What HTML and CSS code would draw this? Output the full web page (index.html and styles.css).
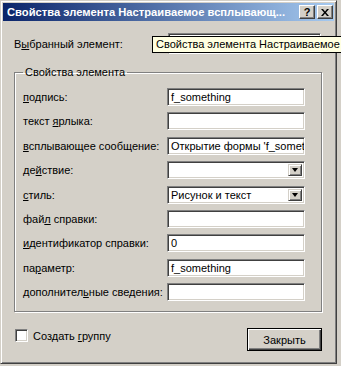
FILE: index.html
```html
<!DOCTYPE html>
<html lang="ru">
<head>
    <meta charset="UTF-8">
    <title>Свойства элемента</title>
    <link rel="stylesheet" href="styles.css">
</head>
<body>
    <div class="window">
        <div class="titlebar">
            <span class="title">Свойства элемента Настраиваемое всплывающ...</span>
            <span class="tbtn help">?</span>
            <span class="tbtn close">
                <svg width="8" height="7" viewBox="0 0 8 7"><path d="M0 0h2l2 2.5L6 0h2L5 3.5 8 7H6L4 4.5 2 7H0l3-3.5z" fill="#000"/></svg>
            </span>
        </div>

        <div class="content">
            <div class="selected-row">
                <span class="lbl">В<u>ы</u>бранный элемент:</span>
                <div class="field combo wide"><span class="drop"></span></div>
                <div class="tooltip">Свойства элемента Настраиваемое всплывающее сообщение</div>
            </div>

            <fieldset class="group">
                <legend>Свойства элемента</legend>
                <div class="grid">
                    <span class="lbl"><u>п</u>одпись:</span>
                    <div class="field">f_something</div>

                    <span class="lbl">текст <u>я</u>рлыка:</span>
                    <div class="field"></div>

                    <span class="lbl"><u>в</u>сплывающее сообщение:</span>
                    <div class="field">Открытие формы 'f_something'</div>

                    <span class="lbl">де<u>й</u>ствие:</span>
                    <div class="field combo"><span class="drop"></span></div>

                    <span class="lbl"><u>с</u>тиль:</span>
                    <div class="field combo">Рисунок и текст<span class="drop"></span></div>

                    <span class="lbl">фай<u>л</u> справки:</span>
                    <div class="field"></div>

                    <span class="lbl"><u>и</u>дентификатор справки:</span>
                    <div class="field">0</div>

                    <span class="lbl">па<u>р</u>аметр:</span>
                    <div class="field">f_something</div>

                    <span class="lbl">дополнител<u>ь</u>ные сведения:</span>
                    <div class="field"></div>
                </div>
            </fieldset>

            <div class="bottom-row">
                <label class="check"><span class="box"></span><span>Создать <u>г</u>руппу</span></label>
                <button class="btn">Закрыть</button>
            </div>
        </div>
    </div>
</body>
</html>
```

FILE: styles.css
```css
body {
    margin: 0;
    background: #d4d0c8;
    font-family: 'Liberation Sans', Arial, sans-serif;
    font-size: 11px;
    color: #000;
    overflow: hidden;
}

u {
    text-decoration: underline;
    text-underline-offset: 1px;
}

.window {
    width: 331px;
    height: 358px;
    border: 1px solid;
    border-color: #d4d0c8 #404040 #404040 #d4d0c8;
    box-shadow: inset 1px 1px 0 #fff, inset -1px -1px 0 #808080;
    padding: 2px;
    background: #d4d0c8;
}

.titlebar {
    height: 18px;
    display: flex;
    align-items: center;
    gap: 2px;
    padding: 0 1px 0 4px;
    background: linear-gradient(90deg, #0a246a, #a6caf0);
}

.title {
    flex: 1;
    color: #fff;
    font-weight: bold;
    font-size: 11.2px;
    white-space: nowrap;
    overflow: hidden;
}

.tbtn {
    width: 14px;
    height: 12px;
    display: flex;
    align-items: center;
    justify-content: center;
    background: #d4d0c8;
    border: 1px solid;
    border-color: #fff #404040 #404040 #fff;
    box-shadow: inset -1px -1px 0 #808080;
    font-weight: bold;
    font-size: 11px;
}

.content {
    padding: 12px 11px 0 11px;
}

.selected-row {
    position: relative;
    display: flex;
    align-items: center;
    height: 21px;
}

.selected-row .lbl {
    width: 154px;
}

.tooltip {
    position: absolute;
    left: 138px;
    top: 3px;
    width: 240px;
    height: 15px;
    line-height: 15px;
    padding-left: 3px;
    background: #ffffe1;
    border: 1px solid #000;
    white-space: nowrap;
    overflow: hidden;
    z-index: 2;
}

.group {
    margin: 12px 0 0 0;
    padding: 9px 16px 10px 8px;
    width: 282px;
    border: 1px solid #808080;
    box-shadow: 1px 1px 0 #fff, inset 1px 1px 0 #fff;
}

.group legend {
    margin-left: 0;
    padding: 0 2px;
    line-height: 13px;
}

.grid {
    display: grid;
    grid-template-columns: 144px 138px;
    grid-auto-rows: 18px;
    row-gap: 6.4px;
    align-items: center;
}

.lbl {
    white-space: nowrap;
}

.field {
    position: relative;
    box-sizing: border-box;
    height: 18px;
    line-height: 14px;
    padding: 1px 3px;
    background: #fff;
    border: 1px solid;
    border-color: #808080 #fff #fff #808080;
    box-shadow: inset 1px 1px 0 #404040, inset -1px -1px 0 #d4d0c8;
    white-space: nowrap;
    overflow: hidden;
}

.field.wide {
    width: 153px;
    height: 21px;
}

.drop {
    position: absolute;
    right: 2px;
    top: 2px;
    bottom: 2px;
    width: 14px;
    box-sizing: border-box;
    background: #d4d0c8;
    border: 1px solid;
    border-color: #d4d0c8 #404040 #404040 #d4d0c8;
    box-shadow: inset 1px 1px 0 #fff, inset -1px -1px 0 #808080;
}

.drop::after {
    content: "";
    position: absolute;
    left: 50%;
    top: 50%;
    margin: -2px 0 0 -3px;
    border-left: 3.5px solid transparent;
    border-right: 3.5px solid transparent;
    border-top: 4px solid #000;
}

.bottom-row {
    display: flex;
    justify-content: space-between;
    align-items: flex-start;
    margin-top: 16px;
    padding-left: 1px;
}

.check {
    display: flex;
    align-items: center;
    gap: 5px;
    margin-top: 1px;
}

.box {
    width: 9px;
    height: 9px;
    background: #fff;
    border: 1px solid;
    border-color: #808080 #fff #fff #808080;
    box-shadow: inset 1px 1px 0 #404040, inset -1px -1px 0 #d4d0c8;
    padding: 1px;
}

.btn {
    width: 75px;
    height: 23px;
    margin-right: 1px;
    background: #d4d0c8;
    font: inherit;
    color: #000;
    border: 1px solid #000;
    box-shadow: inset 1px 1px 0 #fff, inset -1px -1px 0 #404040, inset -2px -2px 0 #808080;
    padding: 0;
}
```
